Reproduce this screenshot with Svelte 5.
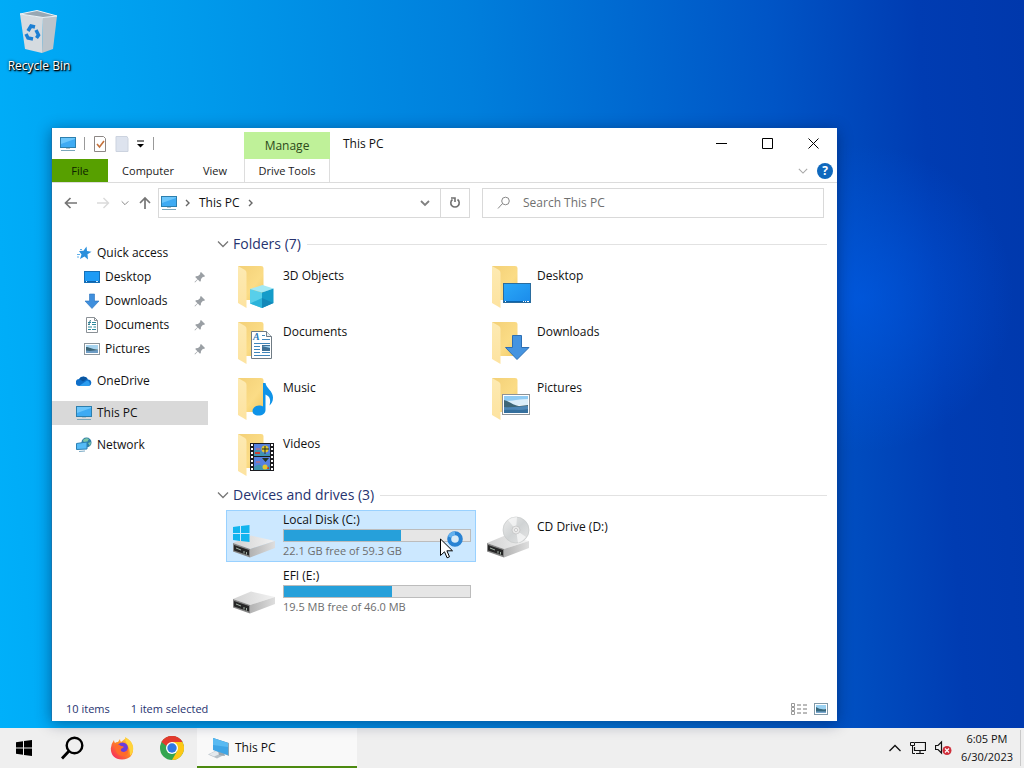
<script>
  const quick = [
    { name: 'Desktop', icon: 'desktop' },
    { name: 'Downloads', icon: 'download' },
    { name: 'Documents', icon: 'document' },
    { name: 'Pictures', icon: 'picture' }
  ];
  const folders = ['3D Objects', 'Desktop', 'Documents', 'Downloads', 'Music', 'Pictures', 'Videos'];
  const drives = [
    { name: 'Local Disk (C:)', kind: 'system', used: 63, info: '22.1 GB free of 59.3 GB' },
    { name: 'CD Drive (D:)', kind: 'cd' },
    { name: 'EFI (E:)', kind: 'plain', used: 58, info: '19.5 MB free of 46.0 MB' }
  ];
  let selected = $state('Local Disk (C:)');
  let query = $state('');
</script>

<svelte:head><title>This PC</title></svelte:head>

{#snippet pc()}
  <svg width="16" height="16" viewBox="0 0 16 16" aria-hidden="true">
    <rect x="0.5" y="1.5" width="15" height="10" fill="#6cc6fb" stroke="#2c7fae" />
    <path d="M1 11V8L15 3v8z" fill="#3fabf3" />
    <path d="M6 12h4v1H6z" fill="#b4c2c8" />
    <path d="M1 14.5h14" stroke="#7ba6ba" />
  </svg>
{/snippet}

{#snippet small(kind)}
  <svg width="16" height="16" viewBox="0 0 16 16" aria-hidden="true">
    {#if kind === 'desktop'}
      <rect x="0.5" y="2.5" width="15" height="11" fill="#1e9bf5" stroke="#1670b8" />
      <path d="M1 12.5h14" stroke="#0d62ac" />
      <path d="M2 12.5h1M12 12.5h2" stroke="#cdeaff" />
    {:else if kind === 'download'}
      <path d="M5.500 1h5v7H15L8 15.500 1 8h4.500z" fill="#3f8fdd" stroke="#2a72bd" stroke-width="0.6" />
    {:else if kind === 'document'}
      <path d="M2.500 0.500h8l3 3v12h-11z" fill="#fff" stroke="#8b9196" />
      <path d="M10.500 0.500v3h3" fill="none" stroke="#8b9196" />
      <path d="M4 5.500h3M8 5.500h4M4 7.500h2M8 7.500h4M4 10h4M9.500 10H12M4 12.500h3M8 12.500h4" stroke="#2c8a9d" />
      <path d="M4.500 8L6.500 3" stroke="#36758a" />
    {:else}
      <rect x="0.5" y="2.500" width="15" height="11" fill="#fff" stroke="#8d969c" />
      <path d="M2 4h12v4H2z" fill="#a8d4ef" />
      <path d="M2 6c3 0 5 2 12 2.500V12H2z" fill="#3b6577" />
      <path d="M2 9.500c4 1 8 0 12-.5v3H2z" fill="#6d9cc4" />
    {/if}
  </svg>
{/snippet}

{#snippet folder(kind)}
  <svg width="48" height="48" viewBox="0 0 48 48" aria-hidden="true">
    <path d="M9 5h23q2.500 0 2.500 2v32H15z" fill="url(#folderBack)" />
    <path d="M9 5l7 4q1.500 1 1.500 3v35L9 42z" fill="url(#folderFront)" />
    {#if kind === '3D Objects'}
      <path d="M21 28L33.500 24 44.500 27.500 33 31.500z" fill="#a3e9f5" />
      <path d="M21 28L33 31.500v15.500L21 42.500z" fill="#58cfea" />
      <path d="M44.500 27.500L33 31.500v15.500l11.500-5z" fill="#149cc9" />
      <path d="M21 42.500L33 37v10z" fill="#2bb3da" />
      <path d="M44.500 42L33 37v10z" fill="#1488b8" />
    {:else if kind === 'Desktop'}
      <rect x="20.500" y="22.500" width="27" height="19" fill="url(#screen)" stroke="#2a6c9e" />
      <path d="M21 40.500h26" stroke="#0a64ae" />
      <path d="M22 40.500h1M40 40.500h1M42 40.500h1M44 40.500h2" stroke="#fff" />
    {:else if kind === 'Documents'}
      <path d="M22.500 14.500h15l5 5v22h-20z" fill="#fff" stroke="#6f7b84" />
      <path d="M37.500 14.500v5h5" fill="#e7ecef" stroke="#6f7b84" />
      <text x="24" y="23" class="letter">A</text>
      <path d="M33 18.500h3M33 22.500h8M25 26.500h16M25 29.500h6M25 32.500h6M25 35.500h6M25 38.500h16" stroke="#3f86ba" />
      <rect x="33" y="28" width="8" height="6" fill="#3f7196" />
      <path d="M33 29h8v2z" fill="#9fd2f0" />
      <path d="M33 35.500h8" stroke="#3f86ba" />
    {:else if kind === 'Downloads'}
      <path d="M29.500 18.500h9v12H46L34 42.500 22.500 30.500h7z" fill="#4594e0" stroke="#2c6fb4" />
    {:else if kind === 'Music'}
      <path d="M34 10h2.500c.5 5 7.500 8 7.500 14.500 0 4-1.500 6-3.500 8 1.500-6 .5-9-4-11V37c0 3.500-3 5.500-7 5.500-3.500 0-6-1.500-6-4.500s3-5.500 6.500-5.500c1.500 0 3 .3 4 1z" fill="#0f93e8" />
    {:else if kind === 'Pictures'}
      <rect x="19.500" y="21.500" width="27" height="20" fill="#fff" stroke="#8c9297" />
      <path d="M21 23h24v9H21z" fill="#8fcbf3" />
      <path d="M21 28q9 0 12-1 8-1 12-1v6H21z" fill="#dbeefa" />
      <path d="M21 27c5 1 9 5 15 6l9-1v3H21z" fill="#3e6777" />
      <path d="M21 34c8 1 16-1 24-1v7H21z" fill="#4d87b7" />
      <path d="M21 37c8-1 16 1 24-1v4H21z" fill="#356f9d" />
    {:else}
      <rect x="21" y="14" width="24" height="28" fill="#1c1c20" />
      <path d="M23 15v26M43 15v26" stroke="#fff" stroke-width="2" stroke-dasharray="2 2" />
      <path d="M25 15h16v12H25zM25 28h16v13H25z" fill="#5580e0" />
      <path d="M25 22q4-3 8 1t8 1v3H25zM25 38q5-4 8-1t8-1v5H25z" fill="#3f93b0" />
      <path d="M26 23h5v2h-5zM35 38h5v2h-5z" fill="#c83d35" />
      <circle cx="36" cy="20" r="3.500" fill="#e2c62f" />
      <path d="M33 20h7M36 17v8" stroke="#23301c" />
      <circle cx="36" cy="38" r="2.500" fill="#e2c62f" />
      <path d="M33 29h7l-3.500 4z" fill="#27351f" />
      <path d="M27 20h4M27 33h4" stroke="#df695b" />
    {/if}
  </svg>
{/snippet}

{#snippet drive(kind)}
  <svg width="48" height="48" viewBox="0 0 48 48" aria-hidden="true">
    <path d="M4 31L22 23.500 46 29 21 37z" fill="url(#driveTop)" />
    <path d="M21 37L46 29v7L21 45.500z" fill="url(#driveSide)" />
    <path d="M4 31L21 37v8.500L4 39.500z" fill="#858585" />
    <path d="M5 33L20 38v5.500L5 38.500z" fill="#262626" />
    <path d="M7 36L12 38M15 39v2.500M17.500 40v2.500" stroke="#a2b0a5" />
    {#if kind === 'system'}
      <path d="M4 15l7-1v7H4zM12 14l8.500-1v8H12zM4 22h7v7l-7-1zM12 22h8.500v8L12 29z" fill="#12b4ee" />
    {:else if kind === 'cd'}
      <circle cx="33" cy="18" r="13" fill="url(#disc)" stroke="#c6c8c9" stroke-width="0.7" />
      <path d="M33 18L25 8q4-3 9-3zM33 18l10 7q-3 4-8 6z" fill="#fff" opacity="0.6" />
      <circle cx="33" cy="18" r="4" fill="#e9e9e9" stroke="#bbb" stroke-width="0.6" />
      <circle cx="33" cy="18" r="1.500" fill="#fff" stroke="#aaa" stroke-width="0.6" />
    {/if}
  </svg>
{/snippet}

{#snippet chevron(size, colour)}
  <svg width={size} height={size} viewBox="0 0 12 12" aria-hidden="true">
    <path d="M1 3.500L6 8.500l5-5" fill="none" stroke={colour} stroke-width="1.300" />
  </svg>
{/snippet}

<div class="screen">
  <svg class="defs" width="0" height="0" aria-hidden="true">
    <defs>
      <linearGradient id="folderBack" x1="0" y1="0" x2="1" y2="1">
        <stop offset="0" stop-color="#f3d077" /><stop offset="0.6" stop-color="#fbdc86" /><stop offset="1" stop-color="#f0c964" />
      </linearGradient>
      <linearGradient id="folderFront" x1="0" y1="0" x2="0" y2="1">
        <stop offset="0" stop-color="#fdeab2" /><stop offset="1" stop-color="#fde3a0" />
      </linearGradient>
      <linearGradient id="screen" x1="0" y1="0" x2="1" y2="1">
        <stop offset="0" stop-color="#2aa8f8" /><stop offset="1" stop-color="#1b8bea" />
      </linearGradient>
      <linearGradient id="driveTop" x1="0" y1="0" x2="1" y2="0">
        <stop offset="0" stop-color="#d2d2d2" /><stop offset="1" stop-color="#f2f2f2" />
      </linearGradient>
      <linearGradient id="driveSide" x1="0" y1="0" x2="1" y2="0">
        <stop offset="0" stop-color="#b2b2b2" /><stop offset="1" stop-color="#dedede" />
      </linearGradient>
      <linearGradient id="disc" x1="0" y1="0" x2="1" y2="1">
        <stop offset="0" stop-color="#ececec" /><stop offset="0.5" stop-color="#d0d3d4" /><stop offset="1" stop-color="#e6e6e6" />
      </linearGradient>
      <linearGradient id="fox" x1="1" y1="0" x2="0" y2="1">
        <stop offset="0" stop-color="#ffe14a" /><stop offset="0.45" stop-color="#ff8a1f" /><stop offset="1" stop-color="#f5166b" />
      </linearGradient>
    </defs>
  </svg>

  <main class="desktop">
    <button class="shortcut">
      <svg width="40" height="46" viewBox="0 0 40 46" aria-hidden="true">
        <path d="M1 5L24 8.500 23 44 6 40z" fill="#d5dbe0" />
        <path d="M24 8.500L38 7l-4 33-11 4z" fill="#bcc4cb" />
        <path d="M1 5L18 1.500 38 7l-14 1.500z" fill="#98a8b4" stroke="#eef2f5" />
        <g fill="none" stroke="#1c7fd3" stroke-width="3.500">
          <path d="M9 22l3-5 4 1" /><path d="M17 21l2.500 5-2 3" /><path d="M14 30l-5-1-2-4" />
        </g>
      </svg>
      <span>Recycle Bin</span>
    </button>

    <section class="window" aria-label="This PC">
      <header class="title-row">
        <div class="quick-tools">
          {@render pc()}
          <i class="rule"></i>
          <button aria-label="Properties">
            <svg width="14" height="16" viewBox="0 0 14 16"><path d="M1.500 0.500h9l2 2v13h-11z" fill="#fff" stroke="#8d8785" /><path d="M4 8l2.500 3L11 5" fill="none" stroke="#c4713b" stroke-width="1.600" /></svg>
          </button>
          <button aria-label="New folder">
            <svg width="14" height="16" viewBox="0 0 14 16"><path d="M1 0.500h11l1 2v13H1z" fill="#dde3ee" stroke="#ccd3df" /></svg>
          </button>
          <button aria-label="Customize Quick Access Toolbar">
            <svg width="8" height="8" viewBox="0 0 8 8"><path d="M0 1h7" stroke="#000" /><path d="M0 4h7L3.500 7.500z" fill="#000" /></svg>
          </button>
          <i class="rule"></i>
        </div>
        <div class="manage">Manage</div>
        <h1>This PC</h1>
        <div class="controls">
          <button aria-label="Minimize"><svg width="11" height="11" viewBox="0 0 11 11"><path d="M0 5.500h11" stroke="#000" /></svg></button>
          <button aria-label="Maximize"><svg width="11" height="11" viewBox="0 0 11 11"><path d="M.5.500h10v10H.5z" fill="none" stroke="#000" /></svg></button>
          <button aria-label="Close"><svg width="11" height="11" viewBox="0 0 11 11"><path d="M.5.500l10 10M10.500.500l-10 10" fill="none" stroke="#000" /></svg></button>
        </div>
      </header>

      <nav class="tabs" aria-label="Ribbon">
        <button class="file">File</button>
        <button class="computer">Computer</button>
        <button class="view">View</button>
        <button class="tools">Drive Tools</button>
        <div class="tab-end">
          <button aria-label="Expand ribbon">{@render chevron(10, '#a8a8a8')}</button>
          <button class="help" aria-label="Help"><span>?</span></button>
        </div>
      </nav>

      <div class="location">
        <div class="history">
          <button aria-label="Back"><svg width="14" height="12" viewBox="0 0 14 12"><path d="M13 6H2M6.500 1L1.500 6l5 5" fill="none" stroke="#757575" stroke-width="1.700" /></svg></button>
          <button aria-label="Forward"><svg width="14" height="12" viewBox="0 0 14 12"><path d="M1 6h11M7.500 1l5 5-5 5" fill="none" stroke="#dadada" stroke-width="1.400" /></svg></button>
          <button aria-label="Recent locations">{@render chevron(8, '#777')}</button>
          <button aria-label="Up"><svg width="12" height="14" viewBox="0 0 12 14"><path d="M6 13V2M1 7l5-5 5 5" fill="none" stroke="#757575" stroke-width="1.700" /></svg></button>
        </div>
        <div class="address">
          {@render pc()}
          <svg width="6" height="8" viewBox="0 0 6 8" aria-hidden="true"><path d="M1 1l3 3-3 3" fill="none" stroke="#666" stroke-width="1.400" /></svg>
          <span>This PC</span>
          <svg width="6" height="8" viewBox="0 0 6 8" aria-hidden="true"><path d="M1 1l3 3-3 3" fill="none" stroke="#666" stroke-width="1.400" /></svg>
          <button class="drop" aria-label="Previous locations"><svg width="10" height="8" viewBox="0 0 10 8"><path d="M1 2l4 4 4-4" fill="none" stroke="#808080" stroke-width="1.800" /></svg></button>
          <button class="refresh" aria-label="Refresh">
            <svg width="12" height="12" viewBox="0 0 12 12"><path d="M8.500 2.500a4.200 4.200 0 1 1-5 0" fill="none" stroke="#707070" stroke-width="1.600" /><path d="M2 1h4v4" fill="none" stroke="#707070" stroke-width="1.600" /></svg>
          </button>
        </div>
        <label class="search">
          <svg width="14" height="14" viewBox="0 0 14 14" aria-hidden="true"><circle cx="8.500" cy="5" r="3.800" fill="none" stroke="#888" /><path d="M5.500 7.500L1 12.500" stroke="#888" /></svg>
          <input type="text" aria-label="Search This PC" placeholder="Search This PC" bind:value={query} />
        </label>
      </div>

      <div class="body">
        <nav class="tree" aria-label="Navigation">
          <ul>
            <li><button>
              <svg width="16" height="16" viewBox="0 0 16 16" aria-hidden="true"><path d="M10.500 1.500l.5 4.500 4.500.800-4 2.400.5 5.300-3.500-3-4.500 2.500 1.500-4.500L3 6l4.500-.2z" fill="#2a8fdc" /><path d="M1 9.500h3M1 12h2M4 4.500h2" stroke="#5fb0ea" /></svg>
              <span>Quick access</span></button></li>
            {#each quick as q}
              <li class="child"><button>
                {@render small(q.icon)}
                <span>{q.name}</span>
                <svg class="pin" width="12" height="12" viewBox="0 0 12 12" aria-hidden="true"><path d="M7 1l4 4-1 1-1-.3L7 8l-.2 2L6 10.800 3.800 8.600 1 11.500l-.5-.5 2.900-2.800L1.200 6 2 5.200l2-.2 2.300-2L6 2z" fill="#9a9fa4" /></svg>
              </button></li>
            {/each}
          </ul>
          <ul>
            <li><button>
              <svg width="16" height="16" viewBox="0 0 16 16" aria-hidden="true"><path d="M3.500 13a3.500 3.500 0 0 1-.4-7A5 5 0 0 1 12 6.500a3.300 3.300 0 0 1 .8 6.500z" fill="#0f6fc9" /><path d="M3 13L11 7.500A3.400 3.400 0 0 1 13 13z" fill="#2c9df0" /><path d="M3.200 6a5 5 0 0 1 8.300-.2L7 8.500z" fill="#0a559f" /></svg>
              <span>OneDrive</span></button></li>
          </ul>
          <ul><li class="current"><button>{@render pc()}<span>This PC</span></button></li></ul>
          <ul>
            <li><button>
              <svg width="16" height="16" viewBox="0 0 16 16" aria-hidden="true"><circle cx="10.500" cy="5.500" r="5" fill="#2f7ea8" /><path d="M7 3q3-3 6-1l-2 3-3 1zM12 6l3-1-1 4z" fill="#7cc6a5" /><path d="M.5 6.500L11 5v7L.5 12.500z" fill="#55bbf7" stroke="#2b80b4" /><path d="M3 14.500l6-.5" stroke="#79a9c4" /></svg>
              <span>Network</span></button></li>
          </ul>
        </nav>

        <div class="content">
          <h2>{@render chevron(12, '#777')}<span>Folders (7)</span></h2>
          <div class="tiles">
            {#each folders as f}
              <button class="tile" class:selected={selected === f} onclick={() => (selected = f)}>
                {@render folder(f)}
                <span class="name">{f}</span>
              </button>
            {/each}
          </div>
          <h2>{@render chevron(12, '#777')}<span>Devices and drives (3)</span></h2>
          <div class="tiles">
            {#each drives as d}
              <button class="tile" class:selected={selected === d.name} onclick={() => (selected = d.name)}>
                {@render drive(d.kind)}
                {#if d.info}
                  <span class="details">
                    <span>{d.name}</span>
                    <span class="bar"><span class="fill" style:width={d.used + '%'}></span></span>
                    <span class="free">{d.info}</span>
                  </span>
                {:else}
                  <span class="name">{d.name}</span>
                {/if}
              </button>
            {/each}
          </div>
        </div>
      </div>

      <footer class="status">
        <span>10 items</span>
        <span>1 item selected</span>
        <div class="modes">
          <button aria-label="Details view">
            <svg width="16" height="13" viewBox="0 0 16 13"><path d="M.5.500h3v3h-3zM.5 4.500h3v3h-3zM.5 8.500h3v3h-3z" fill="#fff" stroke="#999" /><path d="M6 2h4M12 2h4M6 6h4M12 6h4M6 10h4M12 10h4" stroke="#777" /></svg>
          </button>
          <button aria-label="Large icons view">
            <svg width="14" height="12" viewBox="0 0 14 12"><rect x=".5" y=".5" width="13" height="11" fill="#fff" stroke="#8199a8" /><path d="M2 2h10v4H2z" fill="#9bd2f2" /><path d="M2 4q4 3 10 2v4H2z" fill="#35677c" /><path d="M2 8.500h10V10H2z" fill="#7aa8cf" /></svg>
          </button>
        </div>
      </footer>
    </section>

    <svg class="pointer" width="26" height="30" viewBox="0 0 26 30" aria-hidden="true">
      <circle cx="15" cy="9" r="5.800" fill="#bfe0f6" stroke="#2a83d3" stroke-width="4" />
      <path d="M9.500 7A6 6 0 0 1 15 3.200" fill="none" stroke="#64b1ee" stroke-width="3.500" />
      <circle cx="15" cy="9" r="3.300" fill="#d9ebf7" />
      <path d="M.5 9v16.500l4-3.700 2.600 6 2.400-1-2.600-6h5.600z" fill="#fff" stroke="#000" />
    </svg>
  </main>

  <footer class="taskbar">
    <button class="launch" aria-label="Start"><svg width="16" height="16" viewBox="0 0 16 16"><path d="M0 2.200L7 1.200V7.500H0zM8 1.100L16 0v7.500H8zM0 8.500h7v6.300l-7-1zM8 8.500h8V16l-8-1.100z" fill="#000" /></svg></button>
    <button class="launch" aria-label="Search"><svg width="24" height="24" viewBox="0 0 24 24"><circle cx="14.500" cy="9.500" r="7.800" fill="none" stroke="#000" stroke-width="2.400" /><path d="M9 15l-7 7.500" stroke="#000" stroke-width="2.800" /></svg></button>
    <button class="launch" aria-label="Firefox">
      <svg width="24" height="24" viewBox="0 0 24 24">
        <path d="M4 4q0 2 1 3 1-1 3-1l2-3q0 2 1 3l5-4q6 3 7 9 1 12-11 12.500Q1 23 .8 12.500 1 8 4 4z" fill="url(#fox)" />
        <path d="M15 1q6 3 8 9 1 6-3 10 0-8-3-12-2-3-2-7z" fill="#ffd33c" />
        <circle cx="12.500" cy="12" r="5.500" fill="#6a3ddb" />
        <path d="M5 9q3-2 6 1 2 0 3 1l-3 2q-1 3 3 3 4-1 4-5 2 9-6 9-7-1-7-11z" fill="#ff6a2b" />
      </svg>
    </button>
    <button class="launch" aria-label="Chrome">
      <svg width="24" height="24" viewBox="0 0 24 24">
        <circle cx="12" cy="12" r="12" fill="#35a651" />
        <path d="M12 12L1.600 6A12 12 0 0 1 22.400 6z" fill="#e33b2e" />
        <path d="M12 6h10.400A12 12 0 0 1 12 24l5.200-9z" fill="#fdc716" />
        <path d="M1.600 6L6.800 15 12 12z" fill="#35a651" />
        <path d="M1.600 6A12 12 0 0 1 22.400 6H12a6 6 0 0 0-5.600 4z" fill="#e33b2e" />
        <circle cx="12" cy="12" r="6" fill="#fff" /><circle cx="12" cy="12" r="4.700" fill="#2f78e4" />
      </svg>
    </button>
    <button class="task">
      <svg width="24" height="24" viewBox="0 0 24 24" aria-hidden="true">
        <path d="M1 18.500l8-4 9 4-8 4z" fill="#b7c0c7" /><path d="M2 18.200l7-3.200 5 2.500-7 3z" fill="#e4e9ed" />
        <path d="M11 15h5l2 5-6-1z" fill="#98a6b0" />
        <path d="M6 2l16 5v13L7 14z" fill="#8aa7b8" /><path d="M6 2l15 5v12L6 14z" fill="#3ea5e6" /><path d="M6 2l15 5v4L6 9z" fill="#58baf2" />
      </svg>
      <span>This PC</span>
    </button>
    <div class="tray">
      <button aria-label="Show hidden icons"><svg width="12" height="8" viewBox="0 0 12 8"><path d="M.5 7L6 1.500 11.500 7" fill="none" stroke="#111" stroke-width="1.300" /></svg></button>
      <button aria-label="Network"><svg width="16" height="14" viewBox="0 0 16 14"><path d="M5 1.500h10.500v8H4.500V6M10 10v3M6 12.500h8" fill="none" stroke="#111" stroke-width="1.200" /><path d="M.5 1.500h4v3h-4zM2.500 5v7.500H5" fill="none" stroke="#111" /></svg></button>
      <button aria-label="Volume muted"><svg width="17" height="16" viewBox="0 0 17 16"><path d="M.5 5.500h2.500L6.500 2v11L3 9.500H.5z" fill="none" stroke="#111" stroke-width="1.200" /><circle cx="12" cy="10.500" r="4.500" fill="#cf2f3b" /><path d="M10 8.500l4 4M14 8.500l-4 4" stroke="#fff" stroke-width="1.200" /></svg></button>
      <div class="clock"><time>6:05 PM</time><time>6/30/2023</time></div>
    </div>
  </footer>
</div>

<style>
  :global(body) { margin: 0; }
  .screen {
    height: 100vh;
    display: flex;
    flex-direction: column;
    overflow: hidden;
    font: 12px/16px "Open Sans", "Noto Sans", sans-serif;
    color: #111;
  }
  .defs { position: absolute; }
  button {
    margin: 0;
    padding: 0;
    border: 0;
    background: none;
    font: inherit;
    color: inherit;
    display: flex;
    align-items: center;
    justify-content: center;
  }
  svg { flex: none; display: block; }

  .desktop {
    position: relative;
    flex: 1;
    min-height: 0;
    background:
      radial-gradient(circle at 84% 41%, rgba(0, 96, 240, 0.55), rgba(0, 90, 230, 0) 16%),
      linear-gradient(86deg, #00b0fa 0%, #009bec 22%, #007fdc 48%, #0055c6 76%, #003cb2 90%, #0038ac 100%);
  }
  .shortcut {
    position: absolute;
    left: 2px;
    top: 9px;
    width: 74px;
    flex-direction: column;
    gap: 3px;
    color: #fff;
    text-shadow: 1px 1px 2px #000, 1px 1px 1px #000, 0 0 3px rgba(0, 0, 0, 0.6);
  }
  .window {
    position: absolute;
    left: 51px;
    right: 187px;
    top: 128px;
    bottom: 7px;
    box-sizing: border-box;
    display: flex;
    flex-direction: column;
    border-left: 1px solid #1478b4;
    background: #fff;
    box-shadow: 0 2px 14px rgba(0, 20, 60, 0.45);
  }
  .title-row { display: flex; height: 31px; }
  .quick-tools {
    width: 192px;
    padding-left: 8px;
    box-sizing: border-box;
    display: flex;
    align-items: center;
    gap: 8px;
  }
  .rule { width: 1px; height: 13px; background: #999; }
  .manage {
    width: 86px;
    margin-top: 4px;
    background: #bff199;
    color: #2d4a1b;
    display: flex;
    align-items: center;
    justify-content: center;
  }
  h1 { margin: 0; padding: 8px 13px; font: inherit; }
  .controls { margin-left: auto; display: flex; padding-right: 1px; }
  .controls button { width: 46px; }

  .tabs { display: flex; height: 23px; border-bottom: 1px solid #dcdcdc; font-size: 11px; }
  .file { width: 56px; background: #57a000; color: #0d2200; }
  .computer { width: 80px; }
  .view { width: 54px; margin-right: 2px; }
  .computer, .view, .tools { color: #222; }
  .tools { width: 86px; box-sizing: border-box; border: 1px solid #ddd; border-width: 0 1px; }
  .tab-end { margin-left: auto; display: flex; gap: 9px; padding-right: 4px; }
  .help span {
    width: 16px;
    height: 16px;
    border-radius: 8px;
    background: #0f68bd;
    color: #fff;
    font-size: 12px;
    font-weight: 700;
  }

  .location {
    display: grid;
    grid-template-columns: 106px 312fr 354fr;
    align-items: center;
    height: 40px;
    padding-right: 13px;
  }
  .history { display: flex; align-items: center; justify-content: space-between; padding: 0 7px 0 12px; }
  .history button:first-child { margin-right: 8px; }
  .address, .search { height: 30px; box-sizing: border-box; border: 1px solid #d9d9d9; display: flex; align-items: center; }
  .address { padding-left: 2px; gap: 8px; }
  .drop { margin-left: auto; width: 14px; }
  .refresh { width: 29px; align-self: stretch; border-left: 1px solid #d9d9d9; }
  .search { margin-left: 12px; padding-left: 14px; gap: 12px; }
  .search input { flex: 1; min-width: 0; border: 0; padding: 0; outline: 0; background: none; font: inherit; }
  .search input::placeholder { color: #707070; opacity: 1; }

  .body { flex: 1; min-height: 0; display: flex; }
  .tree { width: 156px; padding-top: 18px; display: flex; flex-direction: column; gap: 8px; }
  ul { margin: 0; padding: 0; list-style: none; }
  .tree button { width: 100%; height: 24px; justify-content: flex-start; gap: 5px; padding-left: 24px; }
  .tree .child button { padding-left: 32px; }
  .tree .current { background: #d9d9d9; }
  .pin { margin-left: auto; margin-right: 2px; }

  .content { flex: 1; min-width: 0; padding: 6px 10px 0 9px; }
  h2 {
    margin: 0;
    height: 30px;
    display: flex;
    align-items: center;
    gap: 4px;
    font-size: 14px;
    font-weight: 400;
    color: #26336f;
  }
  h2::after { content: ""; flex: 1; height: 1px; margin-left: 2px; background: #e2e2e2; }
  .tiles { display: grid; grid-template-columns: 250px 250px; gap: 4px; padding-left: 9px; }
  .tiles + h2 { margin-top: 1px; }
  .tile {
    height: 52px;
    padding: 1px 4px 1px 2px;
    border: 1px solid transparent;
    box-sizing: border-box;
    justify-content: flex-start;
    align-items: flex-start;
    gap: 6px;
    text-align: left;
  }
  .tile.selected { background: #cce8ff; border-color: #99d1ff; }
  .name { padding-top: 7px; }
  .details { flex: 1; display: flex; flex-direction: column; }
  .bar { height: 13px; margin: 1px 0; box-sizing: border-box; border: 1px solid #bcbcbc; background: #e6e6e6; display: block; }
  .fill { display: block; height: 100%; background: #26a0da; }
  .free { color: #6d6d6d; font-size: 11px; }
  .letter { font: italic 700 10px "Liberation Serif", serif; fill: #2b78b8; }

  .status { height: 24px; display: flex; align-items: center; gap: 21px; padding: 0 9px 0 14px; font-size: 11px; color: #26336f; }
  .modes { margin-left: auto; display: flex; gap: 7px; }

  .pointer { position: absolute; left: 440px; top: 530px; }

  .taskbar { height: 40px; display: flex; background: #efefef; }
  .launch { width: 50px; }
  .launch:first-child { width: 47px; }
  .task {
    width: 160px;
    box-sizing: border-box;
    padding: 2px 10px 0;
    gap: 4px;
    justify-content: flex-start;
    background: #f9f9f9;
    border-bottom: 2px solid #4c8a10;
  }
  .tray { margin-left: auto; display: flex; align-items: center; gap: 9px; margin-right: 3px; }
  .clock { display: flex; flex-direction: column; align-items: center; font-size: 11px; line-height: 18px; padding-right: 7px; border-right: 1px solid #c9c9c9; }
</style>
